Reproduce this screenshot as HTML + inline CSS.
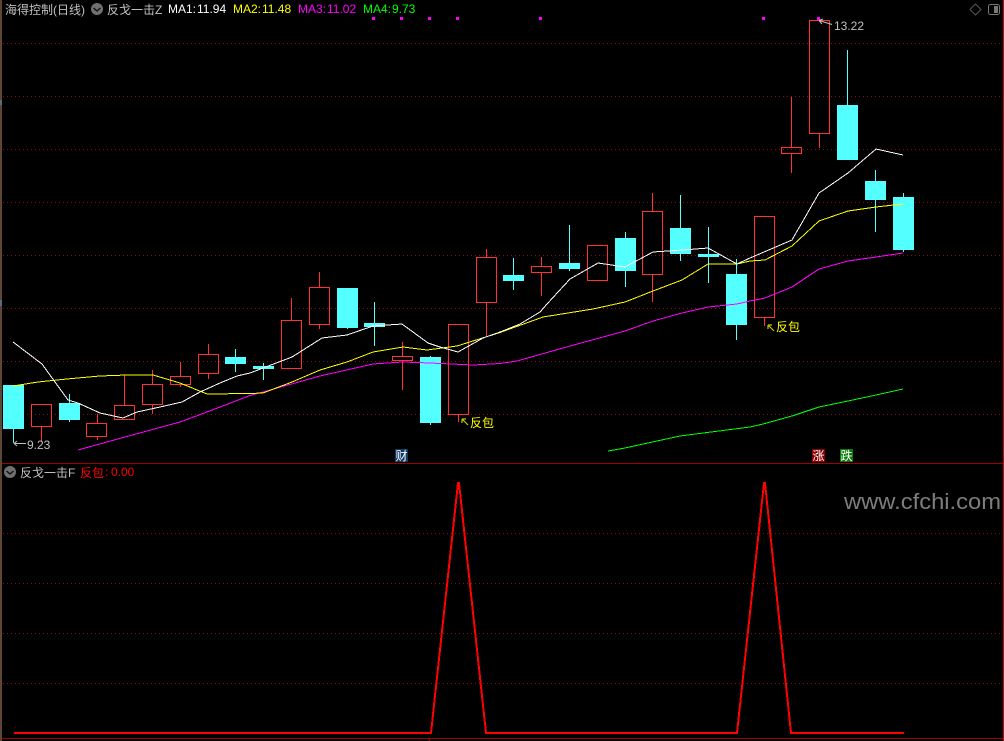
<!DOCTYPE html>
<html><head><meta charset="utf-8"><style>
html,body{margin:0;padding:0;background:#000;width:1004px;height:741px;overflow:hidden}
svg{display:block}
text{font-family:"WenQuanYi Zen Hei","Liberation Sans","Noto Sans CJK SC",sans-serif;font-size:12px}
.l{font-family:"Liberation Sans",sans-serif}
</style></head><body>
<svg width="1004" height="741" viewBox="0 0 1004 741" xmlns="http://www.w3.org/2000/svg">
<rect width="1004" height="741" fill="#000"/>
<rect x="0" y="0" width="2" height="741" fill="#5e4636"/>
<rect x="1003" y="0" width="1" height="741" fill="#b01010"/>
<rect x="0" y="100" width="2" height="5" fill="#5a6a80"/>
<rect x="0" y="300" width="2" height="6" fill="#5a6a80"/>
<g stroke="#8a0c0c" stroke-width="1" stroke-dasharray="1 3" shape-rendering="crispEdges">
<path d="M3 43.5H1002M3 96.5H1002M3 149.5H1002M3 202.5H1002M3 255.5H1002M3 308.5H1002M3 361.5H1002M3 414.5H1002M3 533.5H1002M3 583.5H1002M3 633.5H1002M3 683.5H1002"/>
</g>
<rect x="2" y="463" width="1001" height="1" fill="#a00000"/>
<rect x="2" y="738" width="1001" height="1" fill="#a00000"/>
<rect x="429" y="738" width="1" height="3" fill="#a00000"/>

<!-- red candles -->
<path fill="none" stroke="#ff3232" stroke-width="1" shape-rendering="crispEdges" d="
M41.5 427V441M31.5 404.5H51.5V426.5H31.5Z
M97.5 414V423M97.5 437V440M86.5 423.5H106.5V436.5H86.5Z
M124.5 375V405M114.5 405.5H134.5V419.5H114.5Z
M152.5 370V384M152.5 405V414M142.5 384.5H162.5V404.5H142.5Z
M180.5 362V376M180.5 385V387M170.5 376.5H190.5V384.5H170.5Z
M208.5 344V354M208.5 374V379M198.5 354.5H218.5V373.5H198.5Z
M291.5 298V320M281.5 320.5H301.5V368.5H281.5Z
M319.5 272V287M319.5 325V329M309.5 287.5H329.5V324.5H309.5Z
M402.5 342V356M402.5 361V390M392.5 356.5H412.5V360.5H392.5Z
M458.5 415V422M448.5 324.5H468.5V414.5H448.5Z
M486.5 249V257M486.5 303V336M476.5 257.5H496.5V302.5H476.5Z
M541.5 257V266M541.5 273V296M531.5 266.5H551.5V272.5H531.5Z
M597.5 245.5M587.5 245.5H607.5V280.5H587.5Z
M652.5 193V211M652.5 275V302M642.5 211.5H662.5V274.5H642.5Z
M764.5 318V326M754.5 216.5H774.5V317.5H754.5Z
M791.5 97V147M791.5 154V173M781.5 147.5H801.5V153.5H781.5Z
M819.5 134V148M809.5 20.5H829.5V133.5H809.5Z"/>
<!-- cyan wicks -->
<path fill="none" stroke="#54ffff" stroke-width="1" shape-rendering="crispEdges" d="
M13.5 429V443
M69.5 394V422
M235.5 349V372
M263.5 363V380
M291.5 0V0
M347.5 328V329
M374.5 302V346
M430.5 356V425
M513.5 258V290
M569.5 225V271
M625.5 232V287
M680.5 195V261
M708.5 227V283
M736.5 259V340
M847.5 50V105
M875.5 170V232
M903.5 193V252"/>
<!-- cyan bodies -->
<g fill="#54ffff" shape-rendering="crispEdges">
<rect x="3" y="385" width="21" height="44"/>
<rect x="59" y="403" width="21" height="17"/>
<rect x="225" y="357" width="21" height="7"/>
<rect x="253" y="366" width="21" height="3"/>
<rect x="337" y="288" width="21" height="40"/>
<rect x="364" y="323" width="21" height="4"/>
<rect x="420" y="357" width="21" height="66"/>
<rect x="503" y="275" width="21" height="6"/>
<rect x="559" y="263" width="21" height="6"/>
<rect x="615" y="238" width="21" height="33"/>
<rect x="670" y="228" width="21" height="26"/>
<rect x="698" y="254" width="21" height="3"/>
<rect x="726" y="274" width="21" height="51"/>
<rect x="837" y="105" width="21" height="55"/>
<rect x="865" y="181" width="21" height="19"/>
<rect x="893" y="197" width="21" height="53"/>
</g>
<!-- MA lines -->
<g fill="none" stroke-width="1" shape-rendering="crispEdges" stroke-linejoin="round">
<polyline stroke="#00ff00" points="608,451 625,448 680,436 750,427 763,424 792,416 819,407 848,401 876,395 903,389"/>
<polyline stroke="#ff00ff" points="78,450 125,437 180,422 207,412 250,395.5 263,392 320,376 373,364 403,362 430,363 473,365 500,363.5 517,361 570,346 625,331 653,321 682,313 708,307 737,304 750,301 765,298 792,287 819,269 848,261 876,257 903,253"/>
<polyline stroke="#ffff00" points="13,386 38,382 67,379 100,376 127,375 153,375 180,383 207,394 250,393.5 263,393 292,382 320,370 347,362 373,352 403,347 427,350 457,346 500,332.5 543,317 593,309 625,302 653,291 682,280 708,264 737,264 750,261 765,260 792,246 819,221 848,211 876,207 903,204"/>
<polyline stroke="#ffffff" points="13,342 42,364 68,400 78,403 100,413 123,418 137,412 160,407 182,402 200,392 220,383 237,376 250,373 292,357 322,338 347,335 373,326 402,324 428,343 440,347 458,352 483,338 500,332 520,324 540,312 547,304 570,279 598,263 625,267 653,252 683,250 708,248 737,264 750,258 792,240 819,193 848,173 876,149 903,155"/>
</g>
<!-- magenta dots -->
<g fill="#ff00ff" shape-rendering="crispEdges">
<rect x="372" y="17" width="3" height="3"/><rect x="400" y="17" width="3" height="3"/>
<rect x="428" y="17" width="3" height="3"/><rect x="456" y="17" width="3" height="3"/>
<rect x="539" y="17" width="3" height="3"/><rect x="762" y="17" width="3" height="3"/>
<rect x="817" y="17" width="3" height="3"/>
</g>
<!-- spike -->
<polyline fill="none" stroke="#ff0000" stroke-width="2" shape-rendering="crispEdges" points="14,733 431,733 458,483 459,483 486,733 737,733 764,483 765,483 791,733 904,733"/>

<!-- header -->
<text x="5" y="14" fill="#c0c0c0">海得控制(日线)</text>
<circle cx="97" cy="9" r="6" fill="#707070"/>
<path d="M93.5 8L97 11L100.5 8" fill="none" stroke="#111" stroke-width="1.4"/>
<text x="107" y="14" fill="#c0c0c0">反戈一击Z</text>
<text class="l" x="168" y="13" fill="#ffffff">MA1:</text><text class="l" x="197" y="13" fill="#ffffff">11.94</text>
<text class="l" x="233" y="13" fill="#ffff00">MA2:</text><text class="l" x="262" y="13" fill="#ffff00">11.48</text>
<text class="l" x="298" y="13" fill="#ff00ff">MA3:</text><text class="l" x="327" y="13" fill="#ff00ff">11.02</text>
<text class="l" x="363" y="13" fill="#00ff00">MA4:</text><text class="l" x="392" y="13" fill="#00ff00">9.73</text>
<!-- top right -->
<path d="M975.5 4L981 9.5L975.5 15L970 9.5Z" fill="none" stroke="#555" stroke-width="1"/>
<rect x="988.5" y="4.5" width="11" height="10" rx="2" fill="none" stroke="#777" stroke-width="1"/>
<rect x="994" y="6" width="4" height="7" fill="#777"/>
<!-- labels -->
<path d="M819 20.5L832 24.5M819 20.5L823 19M819 20.5L822 24" fill="none" stroke="#c0c0c0" stroke-width="1"/>
<text class="l" x="834" y="30" fill="#c0c0c0">13.22</text>
<path d="M14 443.5H26M14 443.5L17 441M14 443.5L17 446" fill="none" stroke="#c0c0c0" stroke-width="1"/>
<text class="l" x="27" y="449" fill="#c0c0c0">9.23</text>
<path d="M468 425L462 419M462 419V423M462 419H466" fill="none" stroke="#c8c800" stroke-width="1.2"/>
<text x="470" y="427" fill="#ffff00">反包</text>
<path d="M774 331L768 325M768 325V329M768 325H772" fill="none" stroke="#c8c800" stroke-width="1.2"/>
<text x="776" y="331" fill="#ffff00">反包</text>
<!-- badges -->
<rect x="395" y="449" width="13" height="13" fill="#103a66"/>
<text x="395.5" y="460" fill="#ffffff">财</text>
<rect x="812" y="449" width="13" height="13" fill="#8a0000"/>
<text x="812.5" y="460" fill="#ffffff">涨</text>
<rect x="840" y="449" width="13" height="13" fill="#0a7a0a"/>
<text x="840.5" y="460" fill="#ffffff">跌</text>
<!-- lower pane header -->
<circle cx="10" cy="472" r="6" fill="#707070"/>
<path d="M6.5 471L10 474L13.5 471" fill="none" stroke="#111" stroke-width="1.4"/>
<text x="20" y="477" fill="#c0c0c0">反戈一击F</text>
<text x="80" y="477" fill="#ff0000">反包</text>
<text class="l" x="105" y="476" fill="#ff0000">:</text>
<text class="l" x="111" y="476" fill="#ff0000">0.00</text>
<!-- watermark -->
<text class="l" x="844" y="509" fill="#7d7d7d" style="font-size:22.5px" textLength="157" lengthAdjust="spacingAndGlyphs">www.cfchi.com</text>
</svg>
</body></html>
